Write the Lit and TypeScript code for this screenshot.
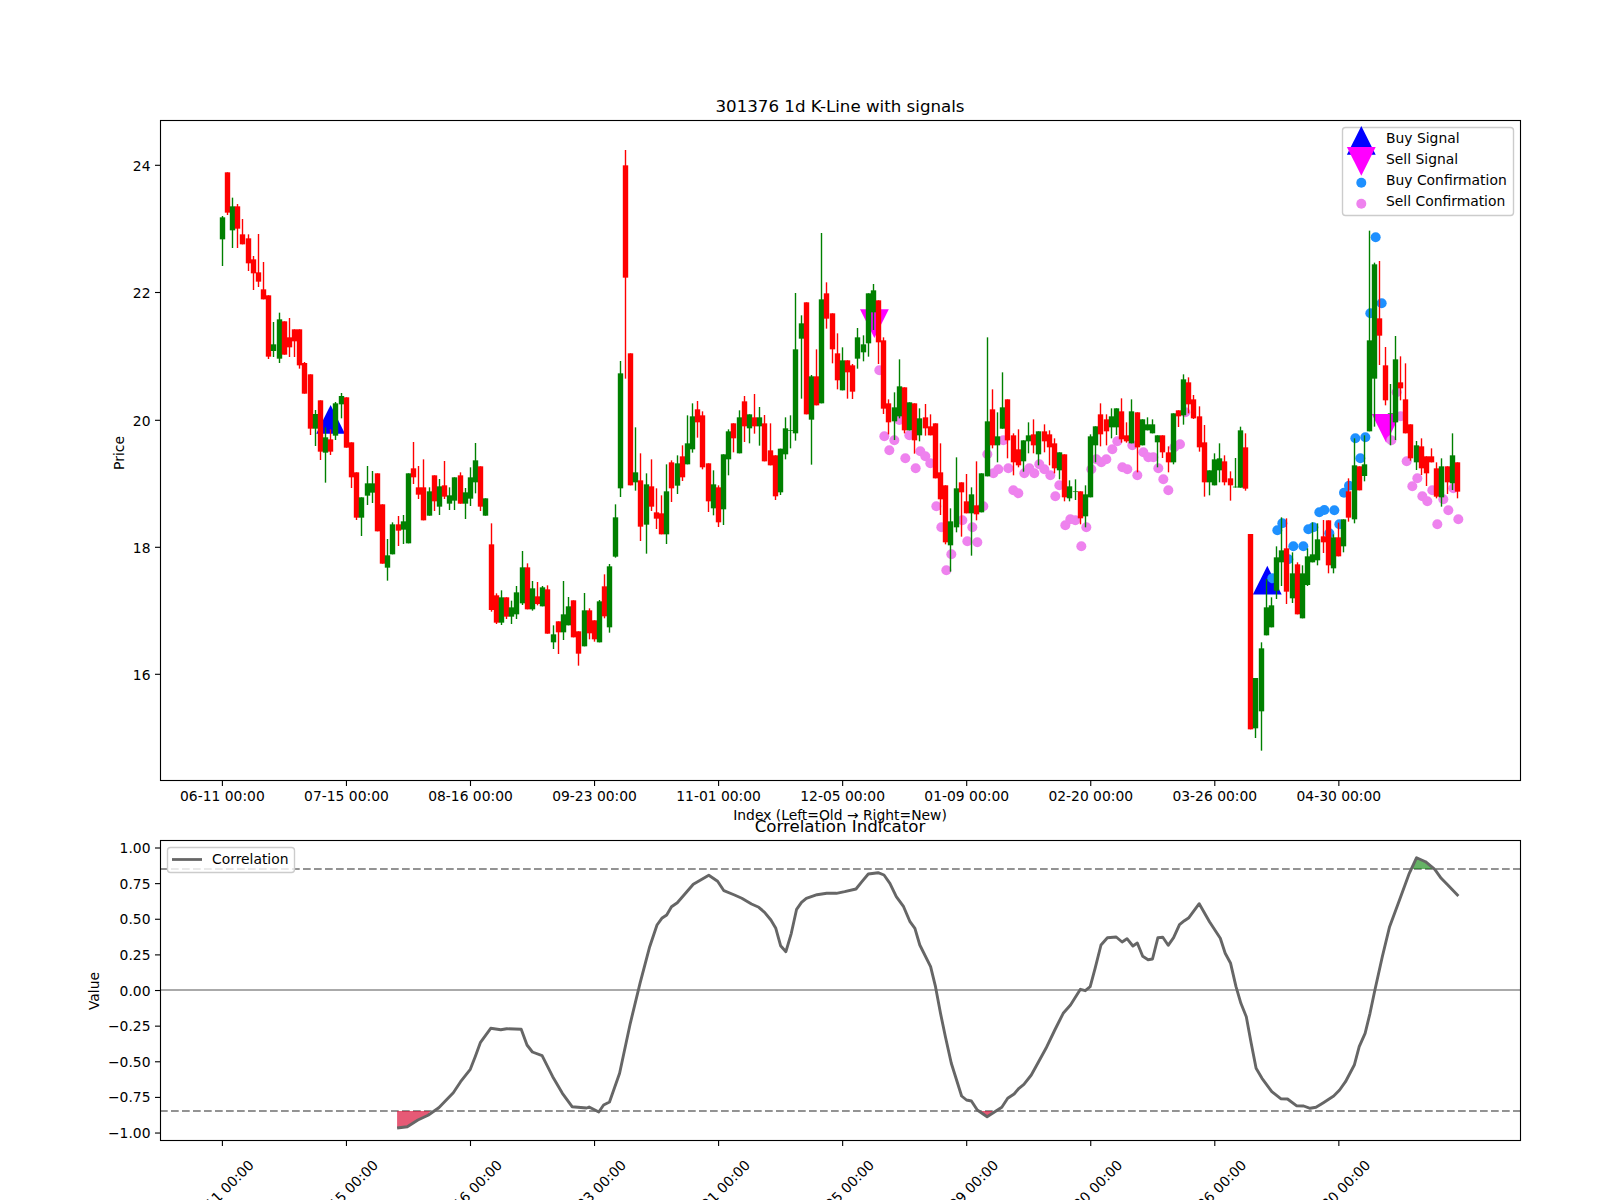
import { LitElement, html, svg, css } from "lit";
import { customElement } from "lit/decorators.js";

type Row = [number, number, number, number, number];
// Rows: [1 = up/green, 0 = down/red, wick top, body top, body bottom, wick bottom], measured at 3x from an origin.
const blocks: { y: number; rows: Row[] }[] = [
  { y: 100, rows: [
    [1,348,352,418,498],[0,217,217,338,345],[1,293,319,391,444],[0,312,319,386,444],[0,357,403,433,433],
    [0,403,415,490,513],[0,468,478,520,570],[0,402,517,545,561],[0,486,568,598,598],[0,586,586,770,777],
    [1,666,733,753,771],[1,638,658,776,789],[0,664,664,764,764],[0,654,712,742,771],[0,688,688,724,771],
    [0,688,688,796,806],
  ]},
  { y: 380, rows: [
    [0,-54,-51,41,41],[0,-17,-17,146,165],[1,90,102,146,198],[0,61,61,215,240],[1,142,172,218,308],
    [0,148,178,215,225],[1,66,70,167,180],[1,39,48,73,115],[0,52,52,203,203],[0,187,187,292,324],
    [0,277,277,413,420],[1,352,352,413,468],[1,258,310,347,375],[1,273,310,338,369],[0,280,280,454,454],
    [0,373,373,551,551],[1,477,526,563,602],[1,427,433,523,523],[0,408,433,452,498],[1,405,424,449,492],
    [1,280,280,490,490],[0,186,265,292,312],[0,258,322,344,357],[0,238,322,421,421],[1,322,334,407,407],
    [0,286,286,364,393],[1,297,319,380,405],[0,243,316,350,357],[1,322,346,371,390],[1,292,292,362,390],
    [0,277,286,371,371],[1,324,337,371,417],[1,262,292,356,378],[1,189,241,307,340],[0,259,259,380,393],
    [1,355,355,407,407],
  ]},
  { y: 400, rows: [
    [0,370,433,630,635],[0,580,586,668,672],[1,571,592,668,675],[0,592,592,650,657],[1,602,622,650,672],
    [1,558,577,643,657],[1,453,502,610,615],[0,490,502,628,628],[1,543,565,628,632],[0,546,589,612,616],
    [1,558,562,619,619],[0,556,568,701,701],[1,676,703,727,747],[0,664,664,697,762],[1,543,643,697,720],
    [1,591,619,676,676],[0,601,601,712,712],[0,694,694,761,797],[1,579,631,739,739],[0,625,631,700,718],
    [0,661,661,718,725],[1,600,604,727,727],[0,523,559,649,655],[1,492,499,682,698],[1,313,352,470,473],
    [1,-117,-80,265,291],[0,-750,-704,-367,-64],[0,-140,-140,256,256],[1,82,217,247,272],[0,160,241,380,423],
    [1,220,253,374,461],[0,178,259,320,333],[0,265,337,356,387],[0,286,340,403,403],[1,193,274,403,432],
    [0,181,187,265,306],[1,166,190,257,282],[0,136,169,232,243],[1,46,130,193,193],[1,10,49,148,158],
    [0,3,28,67,113],[0,34,46,202,208],[0,190,190,304,336],[1,211,253,325,346],[0,256,262,367,381],
    [1,163,163,328,375],[1,88,94,178,226],[0,70,70,115,157],[1,31,52,160,160],[0,-12,4,79,126],
    [1,43,43,85,130],[0,-18,52,79,101],[1,21,52,79,137],[0,45,70,184,184],[0,70,151,196,196],
    [0,166,166,289,300],[1,146,146,277,285],[1,52,85,163,178],[1,46,90,92,145],[1,-321,-152,100,122],
    [1,-254,-230,-184,-4],[0,-293,-293,43,43],[1,-75,-71,59,194],[0,-152,-71,16,16],[1,-501,-302,10,10],
    [0,-353,-320,-244,-214],[0,-260,-260,-152,-110],[0,-200,-140,-59,-32],[1,-158,-119,-29,-29],[0,-119,-119,-83,-4],
  ]},
  { y: 220, rows: [
    [0,432,436,515,537],[1,324,352,416,446],[1,346,373,397,424],[1,220,220,370,410],[1,192,211,277,330],
    [0,241,241,367,432],[0,352,361,566,582],[0,538,550,607,643],[1,517,562,604,660],[1,418,499,589,595],
    [0,502,502,631,640],[1,547,547,631,631],[0,550,550,661,701],[1,565,595,646,664],[0,552,592,625,647],
    [0,583,619,646,646],[0,610,610,775,775],[0,670,757,838,885],[0,796,796,967,973],[1,865,904,976,1055],
    [1,712,805,922,937],[0,787,787,817,950],[0,762,844,880,880],[1,802,823,880,1007],[0,724,856,883,901],
    [1,760,760,877,877],[1,352,604,769,769],[0,508,568,676,685],[1,577,649,676,727],[1,457,562,626,626],
    [0,538,538,661,715],[0,640,646,727,766],[0,628,688,736,742],[1,661,661,724,755],[1,607,646,664,700],
    [0,598,643,676,700],[1,634,634,703,736],[0,613,634,664,697],[0,631,643,682,736],[0,655,670,745,760],
    [1,697,697,751,778],[0,703,703,832,844],[1,781,799,835,844],[1,778,814,816,840],[0,814,814,895,913],
    [1,796,823,889,922],[1,643,649,832,832],[1,619,619,676,727],[0,550,583,643,679],[0,583,598,634,676],
    [1,565,589,622,655],[1,565,565,622,645],[0,535,574,658,668],[0,607,646,664,668],[1,538,574,670,670],
    [0,577,577,682,757],[1,598,598,676,676],[1,592,613,631,631],[1,598,613,640,640],[1,646,646,667,742],
    [0,646,646,697,714],[0,679,697,727,757],[1,580,580,727,733],[0,571,571,589,621],[1,463,478,586,614],
    [0,472,487,553,580],[0,525,538,595,597],[0,559,589,682,695],[0,615,667,787,830],[1,751,751,787,826],
    [1,700,718,796,796],[1,670,715,751,787],[0,706,724,787,796],[0,754,775,796,842],[1,714,800,802,803],
    [1,620,631,803,803],[0,640,682,806,812],
  ]},
  { y: 500, rows: [
    [0,102,102,688,688],[1,534,534,685,714],[1,427,445,634,752],[1,237,322,406,406],[1,292,316,382,382],
    [1,139,172,272,297],[1,52,151,187,258],[0,55,145,275,312],[1,157,220,295,309],[0,187,193,343,343],
    [1,196,220,355,355],[1,145,169,255,258],[1,67,163,187,187],[1,70,118,181,196],[0,60,109,127,159],
    [0,61,61,196,220],[1,103,112,205,220],[0,68,112,169,169],
  ]},
  { y: 220, rows: [
    [1,898,898,979,997],[0,775,814,893,905],[1,655,736,898,910],[0,739,739,811,811],[1,646,733,768,784],
    [1,32,361,634,634],[1,128,133,476,620],[0,123,295,347,435],[0,381,436,541,556],[1,492,580,582,676],
    [1,348,418,607,660],[0,409,487,505,541],[0,430,538,640,640],[0,613,613,715,722],[1,663,676,727,750],
    [0,655,679,745,765],[0,709,709,760,798],[0,685,709,727,727],[0,727,745,830,835],[1,715,739,832,860],
    [0,739,739,787,822],[1,640,706,790,810],[0,727,727,815,835],
  ]},
];

const candleX = (i: number) => 222.3 + 5.168 * i;
const candles = blocks.flatMap((b) =>
  b.rows.map(([up, wt, bt, bb, wb]) => ({
    up: up === 1,
    wt: b.y + wt / 3,
    bt: b.y + bt / 3,
    bb: b.y + bb / 3,
    wb: b.y + wb / 3,
  }))
);

const from3x = (ox: number, oy: number, pts: number[][]) => pts.map(([x, y]) => [ox + x / 3, oy + y / 3]);

const buyDots = [
  ...from3x(1190, 220, [[557,52],[575,250],[541,280],[496,655],[526,652],[511,715],[477,797],[462,818],[433,871],[403,870],[388,877],[277,910],[262,931],[370,922],[355,928],[448,913],[418,940]]),
  ...from3x(1190, 500, [[310,139],[340,139],[295,178],[247,235]]),
];
const sellDots = [
  ...from3x(840, 220, [[118,451],[133,649],[148,691],[163,661],[178,600],[196,715],[208,646],[227,745],[241,694],[256,709],[271,730],[289,859],[304,922],[319,1051],[334,1003],[367,901],[382,964],[397,922],[412,967],[430,859],[442,703],[460,760],[475,748],[490,661],[505,745],[520,811],[535,820],[553,760],[568,745],[583,760],[598,733],[613,748],[631,766],[646,829],[658,796],[676,916],[691,898],[706,901],[724,979],[739,922],[754,748],[769,718],[784,727],[799,718],[817,688],[832,664],[847,742],[862,748],[877,676],[892,766],[910,697],[925,712],[940,712],[955,745],[970,778],[985,811],[1003,682],[1020,673],[1036,577]]),
  ...from3x(1190, 220, [[620,517],[632,589],[604,661],[650,724],[682,775],[667,799],[727,811],[697,829],[712,844],[760,838],[775,871],[742,913],[805,898],[790,805]]),
];

const leftZoom = (x: number, y: number) => [80 + x / 2.0625, 780 + y / 3];
const rightZoom = (x: number, y: number) => [830 + x / 2.037, 780 + y / 3];
const corr = [
  ...[[654,1044],[675,1040],[697,1020],[718,1006],[740,983],[770,938],[785,905],[805,868],[815,830],[826,787],[847,745],[868,749],[880,746],[910,748],[922,795],[933,816],[953,827],[975,890],[995,940],[1015,980],[1045,984],[1050,981],[1070,996],[1080,975],[1092,966],[1113,880],[1135,730],[1155,610],[1175,500],[1190,435],[1200,415],[1210,405],[1220,380],[1232,368],[1265,313],[1297,286],[1315,304],[1328,332],[1350,345],[1365,355],[1385,372],[1400,382],[1412,397],[1425,420],[1435,445],[1445,497],[1456,515],[1467,460],[1478,388],[1488,367],[1498,355],[1520,344],[1540,340]].map(([x, y]) => leftZoom(x, y)),
  ...[[13,340],[30,335],[53,327],[65,305],[78,282],[98,278],[110,285],[122,310],[135,350],[150,380],[163,425],[173,445],[183,495],[205,560],[215,620],[225,700],[235,770],[247,850],[268,948],[278,960],[288,963],[300,990],[320,1010],[350,982],[362,955],[375,942],[385,925],[395,913],[410,885],[425,845],[440,805],[458,750],[475,700],[490,675],[510,628],[520,632],[530,620],[540,565],[552,495],[565,473],[583,471],[595,486],[605,476],[617,498],[626,489],[637,529],[648,539],[657,537],[668,473],[678,472],[689,496],[700,473],[712,434],[722,422],[731,413],[752,371],[773,425],[795,475],[805,520],[816,550],[827,620],[837,670],[848,710],[858,790],[868,865],[880,895],[900,935],[918,956],[932,957],[950,977],[965,978],[978,985],[990,982],[1005,968],[1026,948],[1038,930],[1050,905],[1068,855],[1078,800],[1090,760],[1100,700],[1110,630],[1125,530],[1140,440],[1160,360],[1180,280],[1195,233],[1213,245],[1232,268],[1245,295],[1257,313],[1280,348]].map(([x, y]) => rightZoom(x, y)),
];
const pts = (p: number[][]) => p.map(([x, y]) => `${x.toFixed(1)},${y.toFixed(1)}`).join(" ");

const redFill = [[654,993],[722,993],[718,1006],[697,1020],[675,1040],[654,1044]].map(([x, y]) => leftZoom(x, y));
const redFill2 = [[307,993],[332,993],[320,1010]].map(([x, y]) => rightZoom(x, y));
const greenFill = [[1183,267],[1232,267],[1213,245],[1195,233]].map(([x, y]) => rightZoom(x, y));

const dates = ["06-11 00:00","07-15 00:00","08-16 00:00","09-23 00:00","11-01 00:00","12-05 00:00","01-09 00:00","02-20 00:00","03-26 00:00","04-30 00:00"];
const tickX = dates.map((_, i) => 222.4 + 124.05 * i);
const priceTicks = [[24, 165.3], [22, 292.5], [20, 420.3], [18, 547.3], [16, 674.3]];
const valueTicks = ["1.00","0.75","0.50","0.25","0.00","\u22120.25","\u22120.50","\u22120.75","\u22121.00"];
const valueY = (i: number) => 848 + i * 35.63;

const triUp = (cx: number, top: number) => `${cx},${top} ${cx - 14.4},${top + 28.8} ${cx + 14.4},${top + 28.8}`;
const triDown = (cx: number, top: number) => `${cx - 14.4},${top} ${cx + 14.4},${top} ${cx},${top + 28.8}`;

@customElement("app-root")
export class AppRoot extends LitElement {
  static styles = css`
    :host { display: block; width: 1600px; height: 1200px; background: #fff; overflow: hidden; }
    svg { display: block; }
    text { font-family: "DejaVu Sans", sans-serif; font-size: 13.89px; fill: #000; }
    .title { font-size: 16.67px; text-anchor: middle; }
    .mid { text-anchor: middle; }
    .end { text-anchor: end; }
    .spine { fill: none; stroke: #000; stroke-width: 1.11; }
    .tick { stroke: #000; stroke-width: 1.11; }
    .wick-up, .wick-down { stroke-width: 1.4; }
    .wick-up { stroke: #008000; }
    .wick-down { stroke: #ff0000; }
    .body-up { fill: #008000; }
    .body-down { fill: #ff0000; }
    .buy-dot { fill: #1e90ff; }
    .sell-dot { fill: #ee82ee; }
    .buy-tri { fill: #0000ff; }
    .sell-tri { fill: #ff00ff; }
    .legend { fill: #fff; fill-opacity: 0.8; stroke: #ccc; stroke-width: 1.39; }
    .zero { stroke: #aaa; stroke-width: 2.08; }
    .dash { stroke: #939393; stroke-width: 2.08; stroke-dasharray: 7.7 3.3; }
    .corr { fill: none; stroke: #666; stroke-width: 2.9; stroke-linejoin: round; }
    .handle { stroke: #666; stroke-width: 2.78; }
    .fill-red { fill: #dc143c; fill-opacity: 0.7; }
    .fill-green { fill: #008000; fill-opacity: 0.6; }
  `;

  private candle(c: (typeof candles)[number], i: number) {
    const x = candleX(i);
    const wx = Math.floor(x) + 0.5;
    const left = Math.round(x - 2.5) - 0.2;
    const k = c.up ? "up" : "down";
    return svg`<line class="wick-${k}" x1=${wx} x2=${wx} y1=${c.wt} y2=${c.wb}></line>
      <rect class="body-${k}" x=${left} y=${c.bt} width="5.4" height=${Math.max(c.bb - c.bt, 0.7)}></rect>`;
  }

  render() {
    return html`<svg width="1600" height="1200" viewBox="0 0 1600 1200">
      <!-- price panel -->
      <polygon class="buy-tri" points=${triUp(330.6, 405)}></polygon>
      <polygon class="buy-tri" points=${triUp(1267.3, 565.8)}></polygon>
      <polygon class="sell-tri" points=${triDown(874.4, 309.3)}></polygon>
      <polygon class="sell-tri" points=${triDown(1386.2, 414)}></polygon>
      ${buyDots.map(([x, y]) => svg`<circle class="buy-dot" cx=${x} cy=${y} r="5"></circle>`)}
      ${sellDots.map(([x, y]) => svg`<circle class="sell-dot" cx=${x} cy=${y} r="5"></circle>`)}
      ${candles.map((c, i) => this.candle(c, i))}

      <rect class="legend" x="1342.5" y="127.5" width="171" height="88" rx="3"></rect>
      <polygon class="buy-tri" points=${triUp(1361.3, 126)}></polygon>
      <polygon class="sell-tri" points=${triDown(1361.3, 147)}></polygon>
      <circle class="buy-dot" cx="1361.3" cy="182.7" r="5"></circle>
      <circle class="sell-dot" cx="1361.3" cy="203.7" r="5"></circle>
      <text x="1386" y="143.3">Buy Signal</text>
      <text x="1386" y="164.3">Sell Signal</text>
      <text x="1386" y="185.3">Buy Confirmation</text>
      <text x="1386" y="206.3">Sell Confirmation</text>

      <rect class="spine" x="160.5" y="120.5" width="1360" height="660"></rect>
      <text class="title" x="840" y="111.7">301376 1d K-Line with signals</text>
      ${priceTicks.map(([v, y]) => svg`<line class="tick" x1="155" x2="160" y1=${y} y2=${y}></line>
        <text class="end" x="150.5" y=${y + 5.6}>${v}</text>`)}
      ${tickX.map((x, i) => svg`<line class="tick" x1=${x} x2=${x} y1="781" y2="786"></line>
        <text class="mid" x=${x} y="801">${dates[i]}</text>`)}
      <text class="mid" transform="translate(124 453) rotate(-90)">Price</text>
      <text class="mid" x="840" y="820">Index (Left=Old → Right=New)</text>

      <!-- correlation panel -->
      <line class="zero" x1="160" x2="1520" y1="990" y2="990"></line>
      <line class="dash" x1="160" x2="1520" y1="869" y2="869"></line>
      <line class="dash" x1="160" x2="1520" y1="1111" y2="1111"></line>
      <polygon class="fill-red" points=${pts(redFill)}></polygon>
      <polygon class="fill-red" points=${pts(redFill2)}></polygon>
      <polygon class="fill-green" points=${pts(greenFill)}></polygon>
      <polyline class="corr" points=${pts(corr)}></polyline>

      <rect class="legend" x="167.5" y="847.5" width="127" height="25" rx="3"></rect>
      <line class="handle" x1="172" x2="202" y1="859.5" y2="859.5"></line>
      <text x="212" y="864.3">Correlation</text>

      <rect class="spine" x="160.5" y="840.5" width="1360" height="300"></rect>
      <text class="title" x="840" y="831.7">Correlation Indicator</text>
      ${valueTicks.map((t, i) => svg`<line class="tick" x1="155" x2="160" y1=${valueY(i)} y2=${valueY(i)}></line>
        <text class="end" x="150.5" y=${valueY(i) + 5}>${t}</text>`)}
      ${tickX.map((x, i) => svg`<line class="tick" x1=${x} x2=${x} y1="1141" y2="1146"></line>
        <text class="mid" transform="translate(${x + 2.5} 1196) rotate(-45)">${dates[i]}</text>`)}
      <text class="mid" transform="translate(99 991) rotate(-90)">Value</text>
    </svg>`;
  }
}
